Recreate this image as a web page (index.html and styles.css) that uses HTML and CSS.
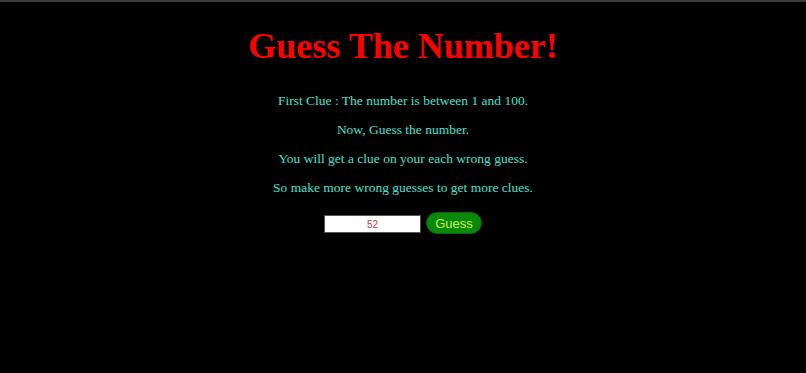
FILE: index.html
```html
<!DOCTYPE html>
<html>
    <head>
        <title>Guess The Number</title>
        <link rel="stylesheet" href="styles.css">
    </head>
    <body>
        <main class="game">
            <h1 class="title">Guess The Number!</h1>
            <p class="clue">First Clue : The number is between 1 and 100.</p>
            <p class="clue">Now, Guess the number.</p>
            <p class="clue">You will get a clue on your each wrong guess.</p>
            <p class="clue">So make more wrong guesses to get more clues.</p>
            <div class="controls">
                <input type="text" class="guess_input" value="52">
                <button class="guess_btn">Guess</button>
            </div>
        </main>
    </body>
</html>
```

FILE: styles.css
```css
html {
    background-color: #000;
}

body {
    margin: 0;
    border-top: 2px solid #3a3a3a;
    background-color: #000;
    font-family: "Liberation Serif", "Times New Roman", serif;
    text-align: center;
}

.game {
    padding-top: 24px;
}

.title {
    color: #f00;
    font-size: 36px;
    line-height: 41px;
    font-weight: bold;
    margin: 0 0 26px 0;
}

.clue {
    color: #40e0d0;
    font-size: 13.5px;
    line-height: 16px;
    margin: 0 0 13px 0;
}

.controls {
    display: flex;
    justify-content: center;
    align-items: center;
    gap: 5px;
    margin-top: 16px;
}

.guess_input {
    width: 97px;
    height: 18px;
    margin-top: 2px;
    box-sizing: border-box;
    border: 1px solid #555;
    padding: 0;
    background-color: #fff;
    color: #d23c3c;
    text-align: center;
    font-family: "Liberation Sans", Arial, sans-serif;
    font-size: 10px;
}

.guess_btn {
    width: 56px;
    height: 22px;
    border: 1px solid #0b5e0b;
    border-radius: 11px;
    background-color: #088a08;
    color: #c8f046;
    font-family: "Liberation Sans", Arial, sans-serif;
    font-size: 13px;
    padding: 0;
}
```
